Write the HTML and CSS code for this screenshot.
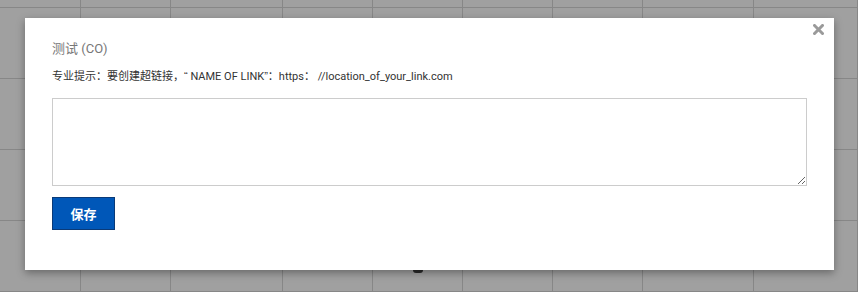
FILE: index.html
```html
<!DOCTYPE html>
<html lang="zh">
<head>
<meta charset="utf-8">
<title>测试 (CO)</title>
<link rel="stylesheet" href="styles.css">
</head>
<body>
<div class="sheet">
  <div class="cell"></div><div class="cell"></div><div class="cell"></div><div class="cell"></div><div class="cell"></div><div class="cell"></div><div class="cell"></div><div class="cell"></div><div class="cell"></div>
  <div class="cell"></div><div class="cell"></div><div class="cell"></div><div class="cell"></div><div class="cell"></div><div class="cell"></div><div class="cell"></div><div class="cell"></div><div class="cell"></div>
  <div class="cell"></div><div class="cell"></div><div class="cell"></div><div class="cell"></div><div class="cell"></div><div class="cell"></div><div class="cell"></div><div class="cell"></div><div class="cell"></div>
  <div class="cell"></div><div class="cell"></div><div class="cell"></div><div class="cell"></div><div class="cell"></div><div class="cell"></div><div class="cell"></div><div class="cell"></div><div class="cell"></div>
  <div class="cell"></div><div class="cell"></div><div class="cell"></div><div class="cell"></div><div class="cell spin-cell"><span class="spinner"></span></div><div class="cell"></div><div class="cell"></div><div class="cell"></div><div class="cell"></div>
  <div class="cell"></div><div class="cell"></div><div class="cell"></div><div class="cell"></div><div class="cell"></div><div class="cell"></div><div class="cell"></div><div class="cell"></div><div class="cell"></div>
</div>

<div class="modal">
  <button class="close" aria-label="关闭">
    <svg width="11" height="11" viewBox="0 0 11 11"><path d="M1.5 1.5 L9.5 9.5 M9.5 1.5 L1.5 9.5" stroke="#9a9a9a" stroke-width="3" stroke-linecap="square"/></svg>
  </button>
  <h2 class="title">测试 (CO)</h2>
  <p class="hint"><span class="zh">专业提示：要创建超链接，</span><span class="q">“</span> NAME OF LINK<span class="q">”</span><span class="zh">：</span>https<span class="zh">：</span> //location_of_your_link.com</p>
  <textarea class="field"></textarea>
  <button class="save">保存</button>
</div>
</body>
</html>
```

FILE: styles.css
```css
* { box-sizing: border-box; }
html, body { margin: 0; padding: 0; }
body {
  width: 858px;
  height: 292px;
  overflow: hidden;
  background: #a0a0a0;
  font-family: Roboto, "Noto Sans CJK SC", sans-serif;
}
.sheet {
  display: grid;
  grid-template-columns: 81px 90px 112px 90px 90px 90px 90px 111px 1fr;
  grid-template-rows: 8px 71px 71px 71px 71px 1fr;
  height: 292px;
}
.cell {
  border-right: 1px solid #878787;
  border-bottom: 1px solid #878787;
}
.spin-cell {
  display: flex;
  justify-content: center;
  padding-top: 49px;
}
.spinner {
  display: block;
  width: 10px;
  height: 3px;
  border-radius: 0 0 4px 4px;
  background: #2a2a2a;
}
.modal {
  position: absolute;
  left: 25px;
  top: 18px;
  width: 809px;
  height: 252px;
  background: #fff;
  box-shadow: 0 3px 8px rgba(0, 0, 0, 0.35);
  padding: 21px 27px 0 27px;
}
.close {
  position: absolute;
  top: 6px;
  right: 10px;
  border: 0;
  background: none;
  padding: 0;
  width: 11px;
  height: 11px;
  display: flex;
}
.title {
  margin: 0;
  font-size: 13px;
  line-height: 20px;
  font-weight: normal;
  color: #777;
}
.hint {
  margin: 9px 0 0;
  font-size: 11px;
  line-height: 17px;
  color: #333;
}
.hint .zh { font-size: 11px; }
.hint .q { font-family: "Liberation Sans", sans-serif; }
.field {
  display: block;
  margin-top: 13px;
  width: 755px;
  height: 88px;
  border: 1px solid #cccccc;
  border-radius: 0;
  padding: 4px;
  font-family: Roboto, "Noto Sans CJK SC", sans-serif;
  resize: both;
}
.save {
  display: block;
  margin-top: 11px;
  width: 63px;
  height: 33px;
  background: #0057b8;
  border: 1px solid #0a3a78;
  color: #fff;
  font-family: Roboto, "Noto Sans CJK SC", sans-serif;
  font-size: 13px;
  font-weight: bold;
  padding: 0;
}
```
